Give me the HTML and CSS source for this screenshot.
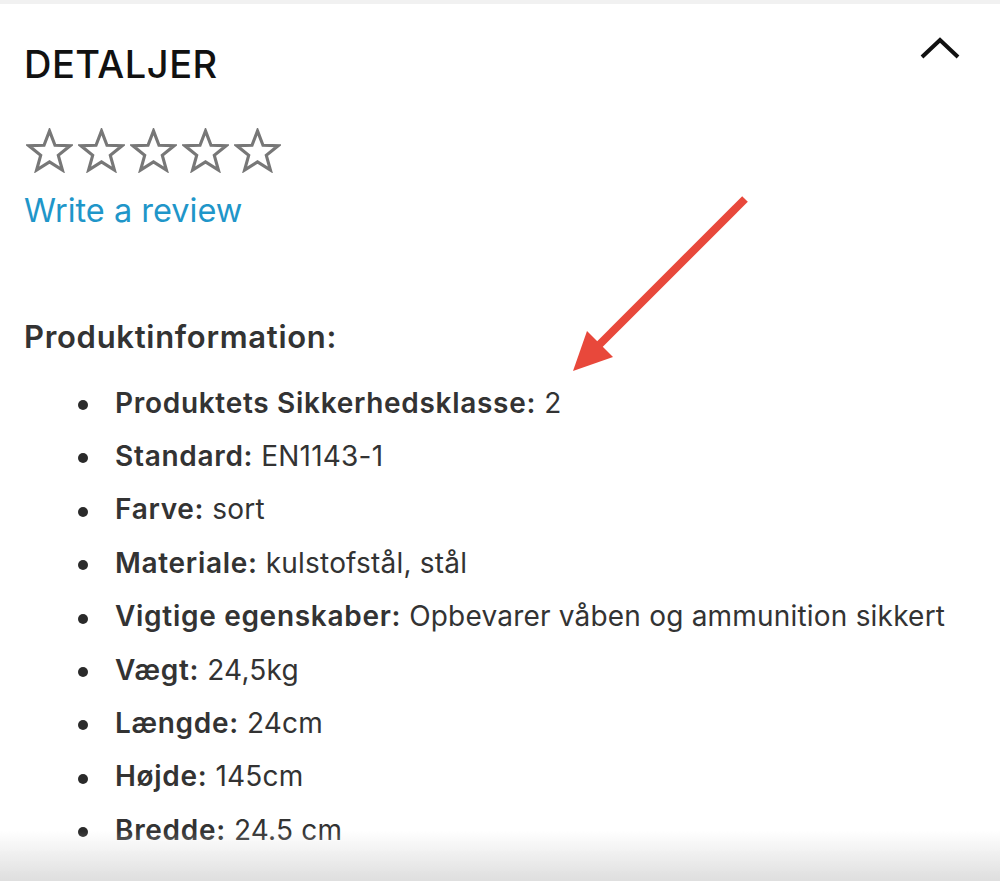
FILE: index.html
```html
<!DOCTYPE html>
<html lang="da">
<head>
    <meta charset="UTF-8">
    <meta name="viewport" content="width=device-width, initial-scale=1.0">
    <title>Detaljer</title>
    <link rel="stylesheet" href="styles.css">
</head>
<body>

<section class="details">
    <div class="details-header">
        <h2>DETALJER</h2>
        <button class="toggle" aria-label="Skjul detaljer">
            <svg width="40" height="24" viewBox="0 0 40 24"><path d="M2 21 L20 4 L38 21" fill="none" stroke="#111" stroke-width="4" stroke-linejoin="miter"/></svg>
        </button>
    </div>

    <div class="rating">
        <div class="stars">
            <svg class="star" viewBox="0 0 48 46"><path d="M24 3 L29.6 17.6 L45 18.2 L33 28 L37.2 43 L24 34.6 L10.8 43 L15 28 L3 18.2 L18.4 17.6 Z"/></svg>
            <svg class="star" viewBox="0 0 48 46"><path d="M24 3 L29.6 17.6 L45 18.2 L33 28 L37.2 43 L24 34.6 L10.8 43 L15 28 L3 18.2 L18.4 17.6 Z"/></svg>
            <svg class="star" viewBox="0 0 48 46"><path d="M24 3 L29.6 17.6 L45 18.2 L33 28 L37.2 43 L24 34.6 L10.8 43 L15 28 L3 18.2 L18.4 17.6 Z"/></svg>
            <svg class="star" viewBox="0 0 48 46"><path d="M24 3 L29.6 17.6 L45 18.2 L33 28 L37.2 43 L24 34.6 L10.8 43 L15 28 L3 18.2 L18.4 17.6 Z"/></svg>
            <svg class="star" viewBox="0 0 48 46"><path d="M24 3 L29.6 17.6 L45 18.2 L33 28 L37.2 43 L24 34.6 L10.8 43 L15 28 L3 18.2 L18.4 17.6 Z"/></svg>
        </div>
        <a href="#" class="write-review">Write a review</a>
    </div>

    <div class="product-info">
        <h3>Produktinformation:</h3>
        <ul>
            <li><strong>Produktets Sikkerhedsklasse:</strong> 2</li>
            <li><strong>Standard:</strong> EN1143-1</li>
            <li><strong>Farve:</strong> sort</li>
            <li><strong>Materiale:</strong> kulstofstål, stål</li>
            <li><strong>Vigtige egenskaber:</strong> Opbevarer våben og ammunition sikkert</li>
            <li><strong>Vægt:</strong> 24,5kg</li>
            <li><strong>Længde:</strong> 24cm</li>
            <li><strong>Højde:</strong> 145cm</li>
            <li><strong>Bredde:</strong> 24.5 cm</li>
        </ul>
    </div>

    <!-- annotation arrow -->
    <svg class="annotation" width="200" height="200" viewBox="0 0 200 200">
        <line x1="175" y1="21" x2="28" y2="168" stroke="#e8483b" stroke-width="8"/>
        <polygon points="3,193 17,153 43,179" fill="#e8483b"/>
    </svg>
</section>

<div class="bottom-fade"></div>

</body>
</html>
```

FILE: styles.css
```css
body {
    font-family: 'Inter', 'Liberation Sans', sans-serif;
    margin: 0;
    padding: 0;
    background: #fff;
    color: #333;
}

.details {
    position: relative;
    border-top: 4px solid #f1f1f1;
    padding: 38px 24px 40px 24px;
}

.details-header {
    display: flex;
    justify-content: space-between;
    align-items: flex-start;
}

.details-header h2 {
    margin: 0;
    font-size: 38px;
    font-weight: 500;
    color: #111;
    letter-spacing: 0.5px;
    line-height: 1.2;
}

.toggle {
    background: none;
    border: none;
    padding: 0;
    margin: -6px 16px 0 0;
    cursor: pointer;
}

.rating {
    margin-top: 40px;
}

.stars {
    display: flex;
    gap: 5px;
    padding-left: 2px;
}

.star {
    width: 47px;
    height: 45px;
    fill: none;
    stroke: #777;
    stroke-width: 3.2;
    stroke-linejoin: miter;
}

.write-review {
    display: inline-block;
    margin-top: 18px;
    font-size: 32.5px;
    color: #1f96c9;
    text-decoration: none;
}

.product-info {
    margin-top: 88px;
}

.product-info h3 {
    margin: 0;
    font-size: 31px;
    font-weight: 600;
    letter-spacing: 0.7px;
    color: #333;
}

.product-info ul {
    margin: 22px 0 0 0;
    padding-left: 91px;
    list-style: none;
}

.product-info li {
    font-size: 28px;
    line-height: 53.4px;
    letter-spacing: 0.2px;
}

.product-info li::before {
    content: "";
    display: inline-block;
    width: 10px;
    height: 10px;
    border-radius: 50%;
    background: #2a2a2a;
    margin: 0 27px 0 -37px;
    vertical-align: middle;
}

.product-info strong {
    font-weight: 600;
    letter-spacing: 0.7px;
}

.annotation {
    position: absolute;
    top: 174px;
    left: 570px;
}

.bottom-fade {
    position: fixed;
    left: 0;
    right: 0;
    bottom: 0;
    height: 50px;
    background: linear-gradient(to bottom, rgba(230, 230, 230, 0), rgba(222, 222, 222, 1));
    pointer-events: none;
}
```
